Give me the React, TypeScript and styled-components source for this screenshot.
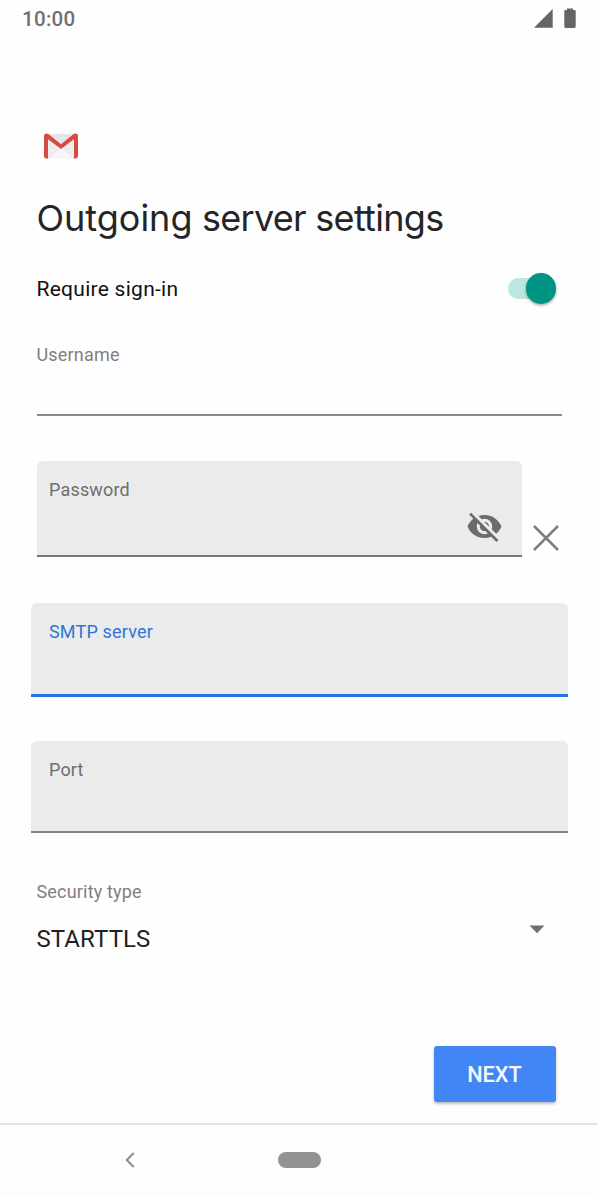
import React from "react";
import styled, { createGlobalStyle } from "styled-components";

const GlobalStyle = createGlobalStyle`
  * { box-sizing: border-box; }
  body { margin: 0; background: #fefefe; }
`;

const Screen = styled.div`
  width: 598px;
  height: 1196px;
  display: flex;
  flex-direction: column;
  background: #fefefe;
  font-family: Roboto, sans-serif;
  overflow: hidden;
`;

const StatusBar = styled.header`
  height: 39px;
  padding: 0 22px 0 22px;
  display: flex;
  justify-content: space-between;
  align-items: flex-start;
`;

const Time = styled.span`
  font-size: 20.5px;
  line-height: 39px;
  font-weight: 500;
  letter-spacing: 0.3px;
  color: #707070;
`;

const StatusIcons = styled.svg`
  display: block;
  width: 44px;
  height: 36px;
`;

const Content = styled.main`
  flex: 1;
  display: flex;
  flex-direction: column;
  align-items: flex-start;
  padding: 94px 30px 0 36.5px;
`;

const Logo = styled.svg`
  display: block;
  width: 34px;
  height: 26px;
  margin-left: 7.5px;
`;

const Title = styled.h1`
  margin: 34px 0 0;
  font-family: Inter, sans-serif;
  font-size: 36px;
  font-weight: 400;
  line-height: 50px;
  letter-spacing: -0.7px;
  color: #242526;
  white-space: nowrap;
`;

const LeadWord = styled.span`
  letter-spacing: 0;
`;

const SwitchRow = styled.div`
  width: 519.5px;
  height: 36px;
  margin-top: 28px;
  display: flex;
  align-items: center;
  justify-content: space-between;
  font-size: 21px;
  line-height: 36px;
  letter-spacing: 0.27px;
  color: #111;
`;

const Track = styled.span`
  width: 48.5px;
  height: 21px;
  margin-top: -1px;
  border-radius: 11px;
  background: #bce6e0;
  display: flex;
  align-items: center;
  justify-content: flex-end;
`;

const Thumb = styled.span`
  width: 30.5px;
  height: 30.5px;
  flex: none;
  border-radius: 50%;
  background: #009485;
  box-shadow: 0 1.5px 3px rgba(0, 0, 0, 0.35);
`;

const Label = styled.label<{ $tone?: string }>`
  display: block;
  font-size: 18px;
  line-height: 24px;
  letter-spacing: 0.18px;
  color: ${(p) => p.$tone ?? "#808080"};
`;

const PlainField = styled.div`
  width: 525px;
  height: 72.5px;
  margin-top: 36px;
  background: linear-gradient(to top, #8a8a8a 1.7px, transparent 0);
`;

const PasswordRow = styled.div`
  display: flex;
  width: 525px;
  height: 96px;
  margin-top: 45.5px;
`;

const FilledField = styled.div<{ $focused?: boolean; $height: number; $top: number }>`
  width: 537px;
  height: ${(p) => p.$height}px;
  margin: ${(p) => p.$top}px 0 0 -6px;
  padding: 17px 18.5px 0;
  border-radius: 6px 6px 0 0;
  background: linear-gradient(
    to top,
    ${(p) => (p.$focused ? "#2374e1 3px" : "#858585 1.7px")},
    #ebebeb 0
  );
`;

const PasswordField = styled.div`
  width: 485px;
  height: 96px;
  padding: 17px 19px 0 12.5px;
  border-radius: 6px 6px 0 0;
  background: linear-gradient(to top, #777 1.5px, #ebebeb 0);
  display: flex;
  justify-content: space-between;
`;

const EyeIcon = styled.svg`
  width: 37px;
  height: 37px;
  margin: 30px -0.5px 0 0;
`;

const CloseIcon = styled.svg`
  width: 28px;
  height: 28px;
  margin: 63px 0 0 10.5px;
`;

const SecurityLabel = styled.div`
  margin-top: 47px;
`;

const SelectRow = styled.div`
  width: 508.5px;
  height: 32px;
  margin-top: 19px;
  display: flex;
  justify-content: space-between;
  font-size: 24px;
  line-height: 32px;
  letter-spacing: 0.1px;
  color: #222;
`;

const Caret = styled.svg`
  width: 16px;
  height: 9px;
  margin-top: 2px;
`;

const NextButton = styled.button`
  width: 122px;
  height: 55.5px;
  margin: 91px 0 0 397px;
  padding: 3px 0 0;
  border: 0;
  border-radius: 3px;
  background: #4285f4;
  box-shadow: 0 2px 3px rgba(0, 0, 0, 0.26);
  font-family: Roboto, sans-serif;
  font-size: 21.7px;
  font-weight: 500;
  line-height: 30px;
  color: #f5f9ff;
`;

const NavBar = styled.nav`
  height: 73px;
  border-top: 2px solid #e4e4e4;
  background: #fdfdfd;
  display: flex;
  align-items: flex-start;
  padding: 27px 0 0 124px;
`;

const BackIcon = styled.svg`
  width: 12px;
  height: 16px;
`;

const HomePill = styled.span`
  width: 43px;
  height: 15.5px;
  margin-left: 142px;
  border-radius: 8px;
  background: #929292;
`;

export default function App() {
  return (
    <Screen>
      <GlobalStyle />
      <StatusBar>
        <Time>10:00</Time>
        <StatusIcons viewBox="532 0 44 36" fill="#656565">
          <path d="M534 27.7 552.7 9v18.7z" />
          <path d="M567 10V8.4h6V10h1.5q1.2 0 1.2 1.2v15.3q0 1.4-1.2 1.4h-9q-1.2 0-1.2-1.4V11.2q0-1.2 1.2-1.2z" />
        </StatusIcons>
      </StatusBar>

      <Content>
        <Logo viewBox="0 0 34 26">
          <rect x="1" y="1" width="32" height="24.5" rx="2" fill="#eeeeee" />
          <path d="M4 25.5 17 13l13 12.5z" fill="#f6f6f6" />
          <path d="M4 25.5 14 16m16 9.5L20 16" stroke="#dcdcdc" strokeWidth=".8" fill="none" />
          <path d="M4 1h26L17 12z" fill="#e6e6e6" />
          <path
            d="M2.5.4Q0 .4 0 3v20.2q0 2.4 2.4 2.4H4V6.2l13 9.9 13-9.9v19.4h1.6q2.4 0 2.4-2.4V3Q34 .4 31.5.4q-1 0-1.8.7L17 11.2 4.3 1.1Q3.5.4 2.5.4z"
            fill="#d54b3f"
          />
        </Logo>
        <Title>
          <LeadWord>Outgoing</LeadWord> server settings
        </Title>

        <SwitchRow>
          <span>Require sign-in</span>
          <Track>
            <Thumb />
          </Track>
        </SwitchRow>

        <PlainField>
          <Label>Username</Label>
        </PlainField>

        <PasswordRow>
          <PasswordField>
            <Label $tone="#6e6e6e">Password</Label>
            <EyeIcon viewBox="0 0 24 24" fill="#6b6b6b">
              <path d="M12 7c2.76 0 5 2.24 5 5 0 .65-.13 1.26-.36 1.83l2.92 2.92c1.51-1.26 2.7-2.89 3.43-4.75-1.73-4.39-6-7.5-11-7.5-1.4 0-2.74.25-3.98.7l2.16 2.16C10.74 7.13 11.35 7 12 7zM2 4.27l2.28 2.28.46.46C3.08 8.3 1.78 10.02 1 12c1.73 4.39 6 7.5 11 7.5 1.55 0 3.03-.3 4.38-.84l.42.42L19.73 22 21 20.73 3.27 3 2 4.27zM7.53 9.8l1.55 1.55c-.05.21-.08.43-.08.65 0 1.66 1.34 3 3 3 .22 0 .44-.03.65-.08l1.55 1.55c-.67.33-1.41.53-2.2.53-2.76 0-5-2.24-5-5 0-.79.2-1.53.53-2.2zm4.31-.78 3.15 3.15.02-.16c0-1.66-1.34-3-3-3l-.17.01z" />
            </EyeIcon>
          </PasswordField>
          <CloseIcon viewBox="0 0 28 28" fill="none" stroke="#7e7e7e" strokeWidth="2.5">
            <path d="m2 2 24 24M26 2 2 26" />
          </CloseIcon>
        </PasswordRow>

        <FilledField $focused $height={93.5} $top={46}>
          <Label $tone="#2e76d8">SMTP server</Label>
        </FilledField>

        <FilledField $height={92} $top={44.5}>
          <Label $tone="#6e6e6e">Port</Label>
        </FilledField>

        <SecurityLabel>
          <Label>Security type</Label>
        </SecurityLabel>
        <SelectRow>
          <span>STARTTLS</span>
          <Caret viewBox="0 0 16 9">
            <path d="M.5.5h15L8 8.2z" fill="#707070" />
          </Caret>
        </SelectRow>

        <NextButton>NEXT</NextButton>
      </Content>

      <NavBar>
        <BackIcon viewBox="0 0 12 16" fill="none" stroke="#8c8c8c" strokeWidth="2">
          <path d="M9.7 1 2.8 8l6.9 7" />
        </BackIcon>
        <HomePill />
      </NavBar>
    </Screen>
  );
}
